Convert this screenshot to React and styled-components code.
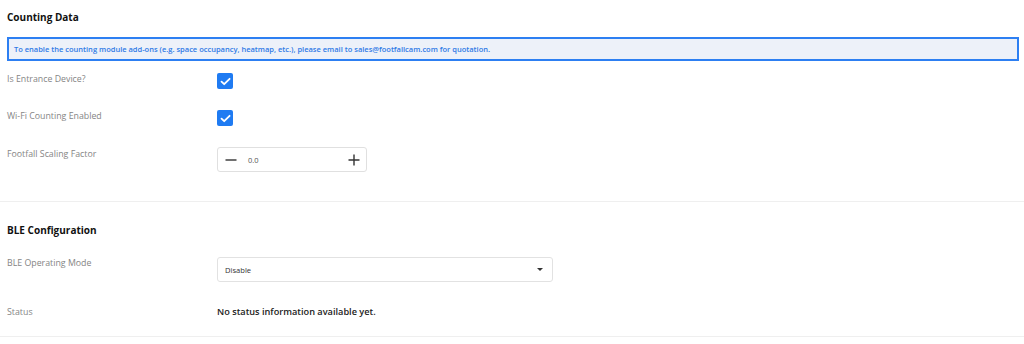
import React from "react";
import styled, { createGlobalStyle } from "styled-components";

const Global = createGlobalStyle`
  html, body { margin: 0; padding: 0; background: #fff; }
  body { font-family: "Open Sans", "Noto Sans", sans-serif; color: #222; }
  * { box-sizing: border-box; }
`;

const Page = styled.div`
  width: 1024px;
  height: 344px;
  overflow: hidden;
  background: #fff;
`;

const Section = styled.section`
  padding: ${(p) => p.$top}px 5px ${(p) => p.$bottom}px 7px;
  border-bottom: 1px solid #efefef;
`;

const Heading = styled.h2`
  margin: 0;
  font-size: 10px;
  line-height: 14px;
  font-weight: 700;
  color: #111;
`;

const Alert = styled.div`
  margin-top: 13px;
  height: 24px;
  border: 2px solid #2d7ff2;
  background: #edf1f9;
  display: flex;
  align-items: center;
  padding: 0 5px;
  font-size: 7.5px;
  font-weight: 600;
  color: #2f7ae6;
`;

const Rows = styled.div`
  display: flex;
  flex-direction: column;
  gap: ${(p) => p.$gap}px;
  margin-top: ${(p) => p.$mt}px;
`;

const Row = styled.div`
  display: grid;
  grid-template-columns: 210px 1fr;
  align-items: start;
`;

const Label = styled.div`
  font-size: 8.8px;
  line-height: 12px;
  color: #858585;
  padding-top: ${(p) => p.$pt || 0}px;
`;

const CheckBox = styled.span`
  width: 16px;
  height: 16px;
  border-radius: 2px;
  background: #1f7bf2;
  display: flex;
  align-items: center;
  justify-content: center;
`;

const Stepper = styled.div`
  width: 150px;
  height: 25px;
  border: 1px solid #e0e0e0;
  border-radius: 3px;
  display: flex;
  align-items: center;
  padding: 0 6px;
`;

const StepBtn = styled.span`
  width: 13px;
  height: 13px;
  display: flex;
  align-items: center;
  justify-content: center;
`;

const StepValue = styled.span`
  flex: 1;
  font-size: 7.5px;
  color: #555;
  padding-left: 11px;
`;

const Select = styled.div`
  width: 336px;
  height: 25px;
  border: 1px solid #e2e2e2;
  border-radius: 3px;
  display: flex;
  align-items: center;
  justify-content: space-between;
  padding: 0 9px 0 7px;
  font-size: 7.6px;
  color: #333;
`;

const Caret = styled.span`
  width: 0;
  height: 0;
  border-left: 3px solid transparent;
  border-right: 3px solid transparent;
  border-top: 3px solid #333;
`;

const StatusText = styled.div`
  font-size: 9.2px;
  line-height: 14px;
  font-weight: 600;
  color: #222;
`;

const Check = () => (
  <svg width="11" height="9" viewBox="0 0 11 9">
    <path d="M1.5 4.6 L4.2 7.2 L9.6 1.8" fill="none" stroke="#fff" strokeWidth="1.8" strokeLinecap="round" strokeLinejoin="round" />
  </svg>
);

const Minus = () => (
  <svg width="12" height="12" viewBox="0 0 12 12">
    <path d="M0.5 6 H11.5" stroke="#333" strokeWidth="1.4" />
  </svg>
);

const Plus = () => (
  <svg width="12" height="12" viewBox="0 0 12 12">
    <path d="M0.5 6 H11.5 M6 0.5 V11.5" stroke="#333" strokeWidth="1.4" />
  </svg>
);

export default function App() {
  return (
    <Page>
      <Global />
      <Section $top={10} $bottom={29}>
        <Heading>Counting Data</Heading>
        <Alert>
          To enable the counting module add-ons (e.g. space occupancy, heatmap, etc.), please email to sales@footfallcam.com for quotation.
        </Alert>
        <Rows $gap={21} $mt={12}>
          <Row>
            <Label>Is Entrance Device?</Label>
            <CheckBox><Check /></CheckBox>
          </Row>
          <Row>
            <Label>Wi-Fi Counting Enabled</Label>
            <CheckBox><Check /></CheckBox>
          </Row>
          <Row>
            <Label $pt={1}>Footfall Scaling Factor</Label>
            <Stepper>
              <StepBtn><Minus /></StepBtn>
              <StepValue>0.0</StepValue>
              <StepBtn><Plus /></StepBtn>
            </Stepper>
          </Row>
        </Rows>
      </Section>
      <Section $top={21} $bottom={17}>
        <Heading>BLE Configuration</Heading>
        <Rows $gap={23} $mt={20}>
          <Row>
            <Label>BLE Operating Mode</Label>
            <Select>
              <span>Disable</span>
              <Caret />
            </Select>
          </Row>
          <Row>
            <Label $pt={1}>Status</Label>
            <StatusText>No status information available yet.</StatusText>
          </Row>
        </Rows>
      </Section>
    </Page>
  );
}
